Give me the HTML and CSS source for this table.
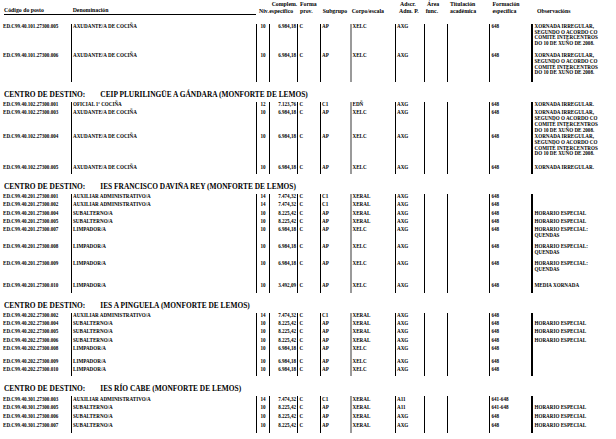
FILE: index.html
```html
<!DOCTYPE html>
<html lang="gl">
<head>
<meta charset="utf-8">
<title>Relación de postos</title>
<link rel="stylesheet" href="styles.css">
</head>
<body>
<div class="page">
  <div class="thead">
    <div><span>Código do posto</span></div>
    <div><span>Denominación</span></div>
    <div><span>Niv.</span></div>
    <div><span class="l1">Complem.</span><span>específico</span></div>
    <div><span>Forma</span><span>prov.</span></div>
    <div><span>Subgrupo</span></div>
    <div><span>Corpo/escala</span></div>
    <div><span class="l1">Adscr.</span><span>Adm. P.</span></div>
    <div><span class="l1">Área</span><span>func.</span></div>
    <div><span>Titulación</span><span>académica</span></div>
    <div><span>Formación</span><span>específica</span></div>
    <div><span>Observacións</span></div>
  </div>

  <div class="block first">
    <div class="row h29"><div>ED.C99.40.101.27300.005</div><div>AXUDANTE/A DE COCIÑA</div><div>10</div><div>6.984,18</div><div>C</div><div>AP</div><div>XELC</div><div>AXG</div><div></div><div></div><div>648</div><div>XORNADA IRREGULAR,<br>SEGUNDO O ACORDO CO<br>COMITÉ INTERCENTROS<br>DO 10 DE XUÑO DE 2008.</div></div>
    <div class="row h29"><div>ED.C99.40.101.27300.006</div><div>AXUDANTE/A DE COCIÑA</div><div>10</div><div>6.984,18</div><div>C</div><div>AP</div><div>XELC</div><div>AXG</div><div></div><div></div><div>648</div><div>XORNADA IRREGULAR,<br>SEGUNDO O ACORDO CO<br>COMITÉ INTERCENTROS<br>DO 10 DE XUÑO DE 2008.</div></div>
  </div>

  <div class="center"><span>CENTRO DE DESTINO:</span><span class="cname">CEIP PLURILINGÜE A GÁNDARA (MONFORTE DE LEMOS)</span></div>
  <div class="block">
    <div class="row h8"><div>ED.C99.40.102.27300.001</div><div>OFICIAL 1ª COCIÑA</div><div>12</div><div>7.123,76</div><div>C</div><div>C1</div><div>EDÑ</div><div>AXG</div><div></div><div></div><div>648</div><div>XORNADA IRREGULAR.</div></div>
    <div class="row h23"><div>ED.C99.40.102.27300.003</div><div>AXUDANTE/A DE COCIÑA</div><div>10</div><div>6.984,18</div><div>C</div><div>AP</div><div>XELC</div><div>AXG</div><div></div><div></div><div>648</div><div>XORNADA IRREGULAR,<br>SEGUNDO O ACORDO CO<br>COMITÉ INTERCENTROS<br>DO 10 DE XUÑO DE 2008.</div></div>
    <div class="row h31"><div>ED.C99.40.102.27300.004</div><div>AXUDANTE/A DE COCIÑA</div><div>10</div><div>6.984,18</div><div>C</div><div>AP</div><div>XELC</div><div>AXG</div><div></div><div></div><div>648</div><div>XORNADA IRREGULAR,<br>SEGUNDO O ACORDO CO<br>COMITÉ INTERCENTROS<br>DO 10 DE XUÑO DE 2008.</div></div>
    <div class="row h9"><div>ED.C99.40.102.27300.005</div><div>AXUDANTE/A DE COCIÑA</div><div>10</div><div>6.984,18</div><div>C</div><div>AP</div><div>XELC</div><div>AXG</div><div></div><div></div><div>648</div><div>XORNADA IRREGULAR.</div></div>
  </div>

  <div class="center"><span>CENTRO DE DESTINO:</span><span class="cname">IES FRANCISCO DAVIÑA REY (MONFORTE DE LEMOS)</span></div>
  <div class="block">
    <div class="row h8"><div>ED.C99.40.201.27300.001</div><div>AUXILIAR ADMINISTRATIVO/A</div><div>14</div><div>7.474,32</div><div>C</div><div>C1</div><div>XERAL</div><div>AXG</div><div></div><div></div><div>648</div><div></div></div>
    <div class="row h8"><div>ED.C99.40.201.27300.002</div><div>AUXILIAR ADMINISTRATIVO/A</div><div>14</div><div>7.474,32</div><div>C</div><div>C1</div><div>XERAL</div><div>AXG</div><div></div><div></div><div>648</div><div></div></div>
    <div class="row h8"><div>ED.C99.40.201.27300.004</div><div>SUBALTERNO/A</div><div>10</div><div>8.225,42</div><div>C</div><div>AP</div><div>XERAL</div><div>AXG</div><div></div><div></div><div>648</div><div>HORARIO ESPECIAL</div></div>
    <div class="row h8"><div>ED.C99.40.201.27300.005</div><div>SUBALTERNO/A</div><div>10</div><div>8.225,42</div><div>C</div><div>AP</div><div>XERAL</div><div>AXG</div><div></div><div></div><div>648</div><div>HORARIO ESPECIAL</div></div>
    <div class="row h17"><div>ED.C99.40.201.27300.007</div><div>LIMPADOR/A</div><div>10</div><div>6.984,18</div><div>C</div><div>AP</div><div>XELC</div><div>AXG</div><div></div><div></div><div>648</div><div>HORARIO ESPECIAL:<br>QUENDAS</div></div>
    <div class="row h17"><div>ED.C99.40.201.27300.008</div><div>LIMPADOR/A</div><div>10</div><div>6.984,18</div><div>C</div><div>AP</div><div>XELC</div><div>AXG</div><div></div><div></div><div>648</div><div>HORARIO ESPECIAL:<br>QUENDAS</div></div>
    <div class="row h22"><div>ED.C99.40.201.27300.009</div><div>LIMPADOR/A</div><div>10</div><div>6.984,18</div><div>C</div><div>AP</div><div>XELC</div><div>AXG</div><div></div><div></div><div>648</div><div>HORARIO ESPECIAL:<br>QUENDAS</div></div>
    <div class="row h10"><div>ED.C99.40.201.27300.010</div><div>LIMPADOR/A</div><div>10</div><div>3.492,09</div><div>C</div><div>AP</div><div>XELC</div><div>AXG</div><div></div><div></div><div>648</div><div>MEDIA XORNADA</div></div>
  </div>

  <div class="center"><span>CENTRO DE DESTINO:</span><span class="cname">IES A PINGUELA (MONFORTE DE LEMOS)</span></div>
  <div class="block">
    <div class="row h8"><div>ED.C99.40.202.27300.002</div><div>AUXILIAR ADMINISTRATIVO/A</div><div>14</div><div>7.474,32</div><div>C</div><div>C1</div><div>XERAL</div><div>AXG</div><div></div><div></div><div>648</div><div></div></div>
    <div class="row h8"><div>ED.C99.40.202.27300.004</div><div>SUBALTERNO/A</div><div>10</div><div>8.225,42</div><div>C</div><div>AP</div><div>XERAL</div><div>AXG</div><div></div><div></div><div>648</div><div>HORARIO ESPECIAL</div></div>
    <div class="row h8"><div>ED.C99.40.202.27300.005</div><div>SUBALTERNO/A</div><div>10</div><div>8.225,42</div><div>C</div><div>AP</div><div>XERAL</div><div>AXG</div><div></div><div></div><div>648</div><div>HORARIO ESPECIAL</div></div>
    <div class="row h8"><div>ED.C99.40.202.27300.006</div><div>SUBALTERNO/A</div><div>10</div><div>8.225,42</div><div>C</div><div>AP</div><div>XERAL</div><div>AXG</div><div></div><div></div><div>648</div><div>HORARIO ESPECIAL</div></div>
    <div class="row h13"><div>ED.C99.40.202.27300.008</div><div>LIMPADOR/A</div><div>10</div><div>6.984,18</div><div>C</div><div>AP</div><div>XELC</div><div>AXG</div><div></div><div></div><div>648</div><div></div></div>
    <div class="row h8"><div>ED.C99.40.202.27300.009</div><div>LIMPADOR/A</div><div>10</div><div>6.984,18</div><div>C</div><div>AP</div><div>XELC</div><div>AXG</div><div></div><div></div><div>648</div><div></div></div>
    <div class="row h9"><div>ED.C99.40.202.27300.010</div><div>LIMPADOR/A</div><div>10</div><div>6.984,18</div><div>C</div><div>AP</div><div>XELC</div><div>AXG</div><div></div><div></div><div>648</div><div></div></div>
  </div>

  <div class="center"><span>CENTRO DE DESTINO:</span><span class="cname">IES RÍO CABE (MONFORTE DE LEMOS)</span></div>
  <div class="block">
    <div class="row h8w"><div>ED.C99.40.301.27300.003</div><div>AUXILIAR ADMINISTRATIVO/A</div><div>14</div><div>7.474,32</div><div>C</div><div>C1</div><div>XERAL</div><div>A11</div><div></div><div></div><div>641-648</div><div></div></div>
    <div class="row h8w"><div>ED.C99.40.301.27300.005</div><div>SUBALTERNO/A</div><div>10</div><div>8.225,42</div><div>C</div><div>AP</div><div>XERAL</div><div>A11</div><div></div><div></div><div>641-648</div><div>HORARIO ESPECIAL</div></div>
    <div class="row h8w"><div>ED.C99.40.301.27300.006</div><div>SUBALTERNO/A</div><div>10</div><div>8.225,42</div><div>C</div><div>AP</div><div>XERAL</div><div>AXG</div><div></div><div></div><div>648</div><div>HORARIO ESPECIAL</div></div>
    <div class="row h11"><div>ED.C99.40.301.27300.007</div><div>SUBALTERNO/A</div><div>10</div><div>8.225,42</div><div>C</div><div>AP</div><div>XERAL</div><div>AXG</div><div></div><div></div><div>648</div><div>HORARIO ESPECIAL</div></div>
  </div>
</div>
</body>
</html>
```
FILE: styles.css
```css
html, body {
  margin: 0;
  padding: 0;
  background: #ffffff;
}

body {
  color: #000000;
  font-family: "Liberation Serif", "Times New Roman", serif;
  font-weight: bold;
}

.page {
  width: 616px;
  height: 439px;
  overflow: hidden;
}

/* shared column template */
.thead,
.row {
  display: grid;
  grid-template-columns: 71px 185px 13px 28px 23px 30px 45px 29px 23px 42px 42px 1fr;
}

/* ---------- column header ---------- */
.thead {
  height: 15px;
  font-size: 5.8px;
  line-height: 6.8px;
  white-space: nowrap;
}

.thead > div {
  display: flex;
  flex-direction: column;
  justify-content: flex-end;
  box-sizing: border-box;
  padding-bottom: 0.5px;
}

.thead > div:nth-child(1) {
  margin-left: 4px;
  border-bottom: 1px solid #000;
}
.thead > div:nth-child(2) {
  padding-left: 1.7px;
  border-bottom: 1px solid #000;
}
.thead > div:nth-child(3) { padding-left: 3px; }
.thead > div:nth-child(4) { padding-left: 0.3px; }
.thead > div:nth-child(4) .l1 { padding-left: 2.4px; }
.thead > div:nth-child(5) { padding-left: 3px; }
.thead > div:nth-child(6) { padding-left: 2.7px; }
.thead > div:nth-child(7) { padding-left: 1.7px; }
.thead > div:nth-child(8) { padding-left: 4px; }
.thead > div:nth-child(8) .l1 { padding-left: 1px; }
.thead > div:nth-child(9) { padding-left: 1.7px; }
.thead > div:nth-child(9) .l1 { padding-left: 1.3px; }
.thead > div:nth-child(10) { padding-left: 3px; }
.thead > div:nth-child(11) { padding-left: 3.5px; }
.thead > div:nth-child(12) { padding-left: 6px; }

/* ---------- blocks of rows ---------- */
.block.first {
  margin-top: 8.5px;
}

.row {
  font-size: 5.1px;
  line-height: 5.8px;
  white-space: nowrap;
}

.row > div {
  box-sizing: border-box;
  padding-top: 0.4px;
}

.row > div + div {
  border-left: 1px solid #000;
}

.row > div:nth-child(1) { padding-left: 3px; }
.row > div:nth-child(2) { padding-left: 1px; }
.row > div:nth-child(3) { text-align: center; }
.row > div:nth-child(4) { text-align: right; padding-right: 1px; }
.row > div:nth-child(5) { padding-left: 1.5px; }
.row > div:nth-child(6) { padding-left: 1px; }
.row > div:nth-child(7) { padding-left: 0.5px; border-left: 2px solid #9a9a9a; }
.row > div:nth-child(8) { padding-left: 1px; }
.row > div:nth-child(11) { padding-left: 1.5px; }
.row > div:nth-child(12) { padding-left: 1.5px; border-left: 2px solid #000; }

.h8 { height: 8.2px; }
.h8w { height: 8.7px; }
.h9 { height: 9.3px; }
.h10 { height: 10px; }
.h11 { height: 11px; }
.h13 { height: 13.4px; }
.h17 { height: 17.1px; }
.h22 { height: 22px; }
.h23 { height: 23.6px; }
.h29 { height: 29.2px; }
.h31 { height: 30.8px; }

/* ---------- centre headings ---------- */
.center {
  margin-top: 9px;
  margin-bottom: 3px;
  height: 8px;
  padding-left: 4px;
  font-size: 7.4px;
  line-height: 8px;
  white-space: nowrap;
}

.cname {
  margin-left: 15px;
}
```
